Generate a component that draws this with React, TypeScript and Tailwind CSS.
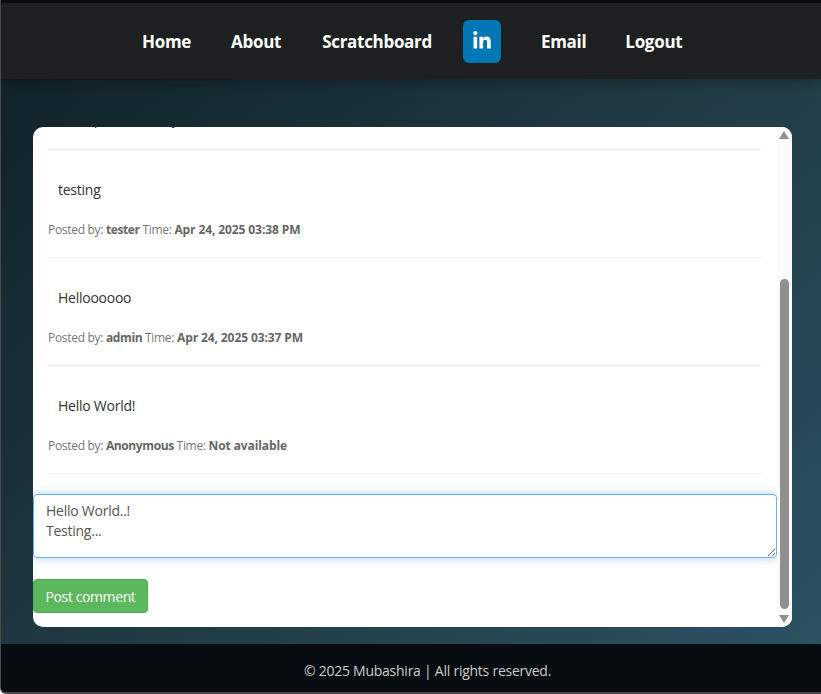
import { FaLinkedinIn } from 'react-icons/fa';

type Comment = {
  text: string;
  author: string;
  time: string;
};

const comments: Comment[] = [
  { text: 'testing', author: 'tester', time: 'Apr 24, 2025 03:38 PM' },
  { text: 'Helloooooo', author: 'admin', time: 'Apr 24, 2025 03:37 PM' },
  { text: 'Hello World!', author: 'Anonymous', time: 'Not available' },
];

function NavLink({ label, className = '' }: { label: string; className?: string }) {
  return (
    <a href="#" className={`text-[17px] font-bold leading-none tracking-[-0.3px] text-white ${className}`}>
      {label}
    </a>
  );
}

function CommentRow({ comment }: { comment: Comment }) {
  return (
    <div className="border-b border-[#eeeeee] pb-[18px] pt-[30px]">
      <p className="pl-[10px] text-[14px] leading-[20px] tracking-[-0.25px] text-[#333333]">{comment.text}</p>
      <p className="mt-[21px] text-[12px] leading-[18px] tracking-[-0.3px] text-[#777777]">
        Posted by: <b className="tracking-[-0.4px] text-[#666666]">{comment.author}</b> Time:{' '}
        <b className="tracking-[-0.1px] text-[#666666]">{comment.time}</b>
      </p>
    </div>
  );
}

function FakeScrollbar() {
  return (
    <div className="absolute bottom-0 right-0 top-0 w-[15px] bg-[#fbfbfb]">
      <div className="absolute left-[2px] top-[4px] h-0 w-0 border-x-[5px] border-b-[8px] border-x-transparent border-b-[#8f8f8f]" />
      <div className="absolute left-[3px] top-[152px] h-[330px] w-[9px] rounded-[5px] bg-[#8f8f8f]" />
      <div className="absolute bottom-[4px] left-[2px] h-0 w-0 border-x-[5px] border-t-[8px] border-x-transparent border-t-[#8f8f8f]" />
    </div>
  );
}

export default function App() {
  return (
    <div
      className="flex h-[694px] flex-col overflow-hidden rounded-bl-[6px] border-b-2 border-l border-[#4a4a4a] bg-[linear-gradient(135deg,#0f2027,#203a43,#2c5364)] text-[#333333]"
      style={{ fontFamily: '"Open Sans", "Noto Sans", sans-serif' }}
    >
      <div className="h-[3px] bg-[#050c0f]" />
      <nav className="flex h-[76px] items-center bg-[#1e1f20] pl-[141px] shadow-[0_4px_12px_rgba(0,0,0,0.3)]">
        <NavLink label="Home" />
        <NavLink label="About" className="ml-[40px]" />
        <NavLink label="Scratchboard" className="ml-[41px]" />
        <a
          href="#"
          className="ml-[31px] flex h-[43px] w-[38px] items-center justify-center rounded-[6px] bg-[#0077b5] text-white"
        >
          <FaLinkedinIn size={20} />
        </a>
        <NavLink label="Email" className="ml-[40px]" />
        <NavLink label="Logout" className="ml-[39px]" />
      </nav>

      <main className="flex-1 pl-[32px] pt-[48px]">
        <section className="relative h-[500px] w-[759px] overflow-hidden rounded-[10px] bg-white pr-[15px]">
          <div className="-mt-[30px] px-[15px]">
            <div className="h-[53px] border-b border-[#eeeeee] pl-[10px] pt-[12px] text-[14px] leading-[20px] tracking-[-0.25px]">
              Hello post from my
            </div>
            {comments.map((comment) => (
              <CommentRow key={comment.author} comment={comment} />
            ))}
          </div>

          <textarea
            defaultValue={'Hello World..!\nTesting...'}
            className="mt-[20px] block h-[64px] w-full rounded-[4px] border border-[#66afe9] px-[12px] py-[6px] text-[14px] leading-[20px] tracking-[-0.25px] text-[#555555] shadow-[0_0_8px_rgba(102,175,233,0.6)] outline-none"
          />
          <button className="mt-[21px] block h-[34px] w-[115px] rounded-[4px] border border-[#4cae4c] bg-[#5cb85c] text-[14px] tracking-[-0.4px] text-white">
            Post comment
          </button>

          <FakeScrollbar />
        </section>
      </main>

      <footer className="flex h-[48px] items-center justify-center bg-[#060c0f] pl-[33px] pt-[4px] text-[14px] tracking-[-0.25px] text-[#cccccc]">
        © 2025 Mubashira | All rights reserved.
      </footer>
    </div>
  );
}
